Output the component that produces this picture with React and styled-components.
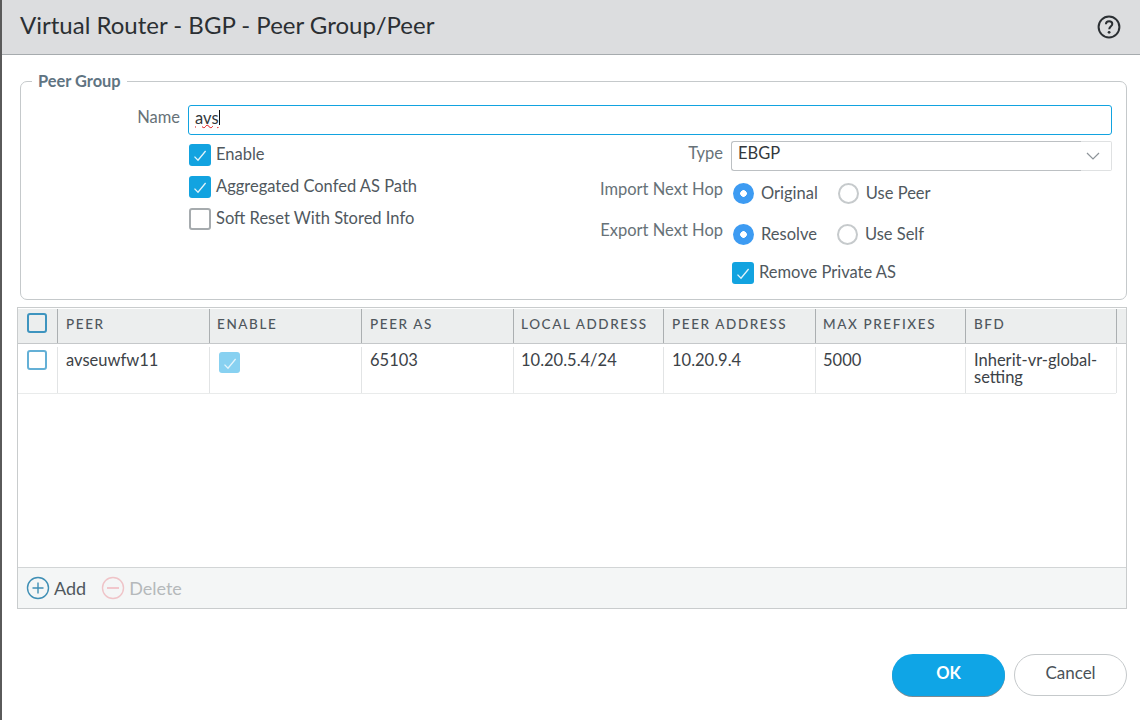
import React from "react";
import styled, { createGlobalStyle } from "styled-components";

const GlobalStyle = createGlobalStyle`
  html, body {
    margin: 0;
    padding: 0;
    background: #fff;
  }
  body {
    font-family: Lato, "Liberation Sans", sans-serif;
    color: #4a5258;
  }
`;

const columns = [
  { title: "PEER", width: 152, pad: 8, value: "avseuwfw11" },
  { title: "ENABLE", width: 152, pad: 7, check: true },
  { title: "PEER AS", width: 152, pad: 8, value: "65103" },
  { title: "LOCAL ADDRESS", width: 150, pad: 7, value: "10.20.5.4/24" },
  { title: "PEER ADDRESS", width: 152, pad: 8, value: "10.20.9.4" },
  { title: "MAX PREFIXES", width: 150, pad: 7, value: "5000" },
  { title: "BFD", width: 151, pad: 8, value: "Inherit-vr-global-setting" },
];

function Tick() {
  return (
    <svg width="14" height="14" viewBox="0 0 14 14" fill="none">
      <path d="M1.5 8.6 L5 12.2 L12.6 3" stroke="#e3f4fb" strokeWidth="1.3" />
    </svg>
  );
}

function CheckRow({ label, checked }) {
  return (
    <CheckLine>
      <CheckBox $checked={checked}>{checked && <Tick />}</CheckBox>
      <CheckText>{label}</CheckText>
    </CheckLine>
  );
}

function Radio({ label, on, gap }) {
  return (
    <RadioItem $gap={gap}>
      <RadioDot $on={on} />
      {label}
    </RadioItem>
  );
}

export default function App() {
  return (
    <Dialog>
      <GlobalStyle />
      <Header>
        <Title>Virtual Router - BGP - Peer Group/Peer</Title>
        <svg width="24" height="24" viewBox="0 0 24 24" fill="none">
          <circle cx="12" cy="12" r="10.4" stroke="#2b2f33" strokeWidth="2" />
          <path
            d="M8.9 9.2 C9 7.2 10.4 6.3 12.1 6.3 C14 6.3 15.3 7.4 15.3 9 C15.3 11.2 12.4 11.3 12.2 14.2"
            stroke="#2b2f33"
            strokeWidth="2"
          />
          <circle cx="12.1" cy="17.3" r="1.4" fill="#2b2f33" />
        </svg>
      </Header>
      <Body>
        <Group>
          <Legend>Peer Group</Legend>
          <NameRow>
            <NameLabel>Name</NameLabel>
            <NameField>
              <Misspelt>avs</Misspelt>
              <Caret />
            </NameField>
          </NameRow>
          <OptionsGrid>
            <LeftOptions>
              <CheckRow label="Enable" checked />
              <CheckRow label="Aggregated Confed AS Path" checked />
              <CheckRow label="Soft Reset With Stored Info" />
            </LeftOptions>
            <RightOptions>
              <TypeRow>
                <SideLabel>Type</SideLabel>
                <Select>
                  <SelectValue>EBGP</SelectValue>
                  <SelectArrow>
                    <svg width="16" height="10" viewBox="0 0 16 10" fill="none">
                      <path d="M2 2 L8 8 L14 2" stroke="#8d9499" strokeWidth="1.2" />
                    </svg>
                  </SelectArrow>
                </Select>
              </TypeRow>
              <HopRow>
                <SideLabel>Import Next Hop</SideLabel>
                <Radios>
                  <Radio label="Original" on gap={20} />
                  <Radio label="Use Peer" />
                </Radios>
              </HopRow>
              <HopRow>
                <SideLabel>Export Next Hop</SideLabel>
                <Radios>
                  <Radio label="Resolve" on gap={20} />
                  <Radio label="Use Self" />
                </Radios>
              </HopRow>
              <RemoveRow>
                <CheckRow label="Remove Private AS" checked />
              </RemoveRow>
            </RightOptions>
          </OptionsGrid>
        </Group>

        <TablePanel>
          <HeadRow>
            <SelectCell $head>
              <TableBox $head />
            </SelectCell>
            {columns.map((c) => (
              <HeadCell key={c.title} $width={c.width} $pad={c.pad}>
                {c.title}
              </HeadCell>
            ))}
          </HeadRow>
          <DataRow>
            <SelectCell>
              <TableBox />
            </SelectCell>
            {columns.map((c) => (
              <DataCell key={c.title} $width={c.width} $pad={c.pad}>
                {c.check ? (
                  <FadedCheck>
                    <Tick />
                  </FadedCheck>
                ) : (
                  c.value
                )}
              </DataCell>
            ))}
          </DataRow>
          <TableSpace />
          <TableFooter>
            <FooterAction>
              <svg width="24" height="24" viewBox="0 0 24 24" fill="none">
                <circle cx="12" cy="12" r="10.5" stroke="#3f8fb5" strokeWidth="1.4" />
                <path d="M12 6.5 V17.5 M6.5 12 H17.5" stroke="#3f8fb5" strokeWidth="1.4" />
              </svg>
              Add
            </FooterAction>
            <FooterAction $disabled>
              <svg width="24" height="24" viewBox="0 0 24 24" fill="none">
                <circle cx="12" cy="12" r="10.5" stroke="#efc4c8" strokeWidth="1.4" />
                <path d="M6 12 H18" stroke="#efb4ba" strokeWidth="1.4" />
              </svg>
              Delete
            </FooterAction>
          </TableFooter>
        </TablePanel>

        <Buttons>
          <OkButton>OK</OkButton>
          <CancelButton>Cancel</CancelButton>
        </Buttons>
      </Body>
    </Dialog>
  );
}

const Dialog = styled.div`
  width: 1140px;
  height: 720px;
  box-sizing: border-box;
  border-left: 2px solid #5a5a5a;
  background: #fff;
  overflow: hidden;
`;

const Header = styled.header`
  height: 54px;
  box-sizing: content-box;
  border-bottom: 1px solid #a6abae;
  background: #dcdddf;
  display: flex;
  align-items: center;
  justify-content: space-between;
  padding: 0 19px 0 18px;
`;

const Title = styled.h1`
  margin: -6px 0 0;
  font-size: 24px;
  font-weight: 400;
  color: #2b2f33;
`;

const Body = styled.div`
  padding: 0 13px 0 15px;
`;

const Group = styled.fieldset`
  margin: 17px 0 0 3px;
  padding: 0;
  height: 228px;
  box-sizing: border-box;
  border: 1px solid #c5c9cb;
  border-radius: 7px;
  min-width: 0;
`;

const Legend = styled.legend`
  margin-left: 11px;
  padding: 0 6px;
  font-size: 16.4px;
  font-weight: 700;
  line-height: 18px;
  color: #5f7482;
`;

const NameRow = styled.div`
  display: flex;
  align-items: center;
  gap: 8px;
  margin: 15px 14px 0 0;
`;

const NameLabel = styled.label`
  width: 159px;
  text-align: right;
  font-size: 16.5px;
  color: #677278;
  position: relative;
  top: -3px;
`;

const NameField = styled.div`
  flex: 1;
  height: 30px;
  box-sizing: border-box;
  border: 1px solid #12a3e0;
  border-radius: 3px;
  padding: 0 6px 5px;
  display: flex;
  align-items: center;
  font-size: 16.5px;
  color: #33383c;
`;

const Misspelt = styled.span`
  text-decoration: underline wavy #e01414 1px;
  text-underline-offset: 0px;
`;

const Caret = styled.span`
  width: 1px;
  height: 15px;
  background: #111;
`;

const OptionsGrid = styled.div`
  display: flex;
  margin: 6px 14px 0 168px;
`;

const LeftOptions = styled.div`
  width: 399px;
  padding-top: 3px;
  display: flex;
  flex-direction: column;
  gap: 10px;
`;

const CheckLine = styled.div`
  height: 22px;
  display: flex;
  align-items: center;
  gap: 5px;
  font-size: 16.5px;
  line-height: 18px;
  color: #50585e;
`;

const CheckText = styled.span`
  margin-top: -3px;
`;

const CheckBox = styled.span`
  width: 22px;
  height: 22px;
  box-sizing: border-box;
  border-radius: 3px;
  display: flex;
  align-items: center;
  justify-content: center;
  background: ${({ $checked }) => ($checked ? "#12a3e0" : "#fff")};
  border: ${({ $checked }) => ($checked ? "none" : "2px solid #a6abae")};
`;

const RightOptions = styled.div`
  flex: 1;
  display: flex;
  flex-direction: column;
`;

const TypeRow = styled.div`
  display: flex;
  align-items: center;
  gap: 8px;
  & > span:first-child {
    position: relative;
    top: -3px;
  }
`;

const SideLabel = styled.span`
  width: 135px;
  flex-shrink: 0;
  text-align: right;
  font-size: 16.5px;
  color: #677278;
  white-space: nowrap;
`;

const Select = styled.div`
  flex: 1;
  height: 30px;
  display: flex;
`;

const SelectValue = styled.div`
  flex: 1;
  box-sizing: border-box;
  padding: 0 6px;
  border: 1px solid #bcc0c3;
  border-right: none;
  border-radius: 3px 0 0 3px;
  font-size: 16.5px;
  line-height: 22px;
  color: #33383c;
`;

const SelectArrow = styled.div`
  width: 31px;
  box-sizing: border-box;
  padding-right: 6px;
  border: 1px solid #dfe1e2;
  border-left: none;
  border-radius: 0 2px 2px 0;
  display: flex;
  align-items: center;
  justify-content: center;
`;

const HopRow = styled.div`
  display: flex;
  gap: 8px;
  height: 22px;
  margin-top: 11px;
  & + & {
    margin-top: 19px;
  }
  & > span:first-child {
    position: relative;
    top: -3px;
  }
`;

const Radios = styled.div`
  display: flex;
  margin-left: 2px;
`;

const RadioItem = styled.div`
  display: flex;
  align-items: center;
  gap: 7px;
  font-size: 16.5px;
  color: #50585e;
  margin-right: ${({ $gap }) => $gap || 0}px;
`;

const RadioDot = styled.span`
  width: 21px;
  height: 21px;
  box-sizing: border-box;
  border-radius: 50%;
  ${({ $on }) =>
    $on
      ? "background: radial-gradient(circle, #fff 0 3px, #3d9bf2 3.6px);"
      : "border: 2px solid #c6cacc;"}
`;

const RemoveRow = styled.div`
  margin: 17px 0 0 144px;
`;

const TablePanel = styled.section`
  margin-top: 7px;
  height: 302px;
  box-sizing: border-box;
  border: 1px solid #c9cccd;
  display: flex;
  flex-direction: column;
`;

const HeadRow = styled.div`
  display: flex;
  height: 34px;
  margin-top: 1px;
  flex-shrink: 0;
  background: #eceeee;
  border-bottom: 1px solid #c5c8ca;
`;

const DataRow = styled.div`
  display: flex;
  height: 50px;
  box-sizing: border-box;
  flex-shrink: 0;
  border-bottom: 1px solid #e9ebeb;
  margin-right: 10px;
`;

const SelectCell = styled.div`
  width: 40px;
  flex-shrink: 0;
  display: flex;
  justify-content: center;
  align-items: flex-start;
  padding-top: ${({ $head }) => ($head ? "4px" : "3px")};
  padding-right: 1px;
  box-sizing: border-box;
  border-right: 1px solid ${({ $head }) => ($head ? "#abafb1" : "#e2e4e5")};
  margin-top: ${({ $head }) => ($head ? "0" : "3px")};
`;

const TableBox = styled.span`
  width: 20px;
  height: 20px;
  box-sizing: border-box;
  border-radius: 3px;
  border: 2px solid ${({ $head }) => ($head ? "#3d94bf" : "#64b0d6")};
  background: ${({ $head }) => ($head ? "#eceeee" : "#fff")};
`;

const HeadCell = styled.div`
  width: ${({ $width }) => $width}px;
  flex-shrink: 0;
  box-sizing: border-box;
  padding: 0 ${({ $pad }) => $pad}px;
  border-right: 1px solid #abafb1;
  font-size: 13.5px;
  font-weight: 500;
  line-height: 30px;
  letter-spacing: 1.6px;
  color: #4f575d;
  white-space: nowrap;
`;

const DataCell = styled.div`
  width: ${({ $width }) => $width}px;
  flex-shrink: 0;
  box-sizing: border-box;
  margin-top: 3px;
  padding: 5px ${({ $pad }) => $pad}px 0;
  border-right: 1px solid #e2e4e5;
  font-size: 16.5px;
  line-height: 17px;
  color: #3c4247;
`;

const FadedCheck = styled.span`
  display: flex;
  width: 21px;
  height: 21px;
  margin: 0 0 0 2px;
  border-radius: 3px;
  align-items: center;
  justify-content: center;
  background: #88d1f1;
`;

const TableSpace = styled.div`
  flex: 1;
`;

const TableFooter = styled.div`
  height: 41px;
  box-sizing: border-box;
  flex-shrink: 0;
  border-top: 1px solid #d2d5d6;
  background: #f4f6f6;
  display: flex;
  align-items: center;
  gap: 15px;
  padding-left: 8px;
`;

const FooterAction = styled.div`
  display: flex;
  align-items: center;
  gap: 4px;
  font-size: 18px;
  color: ${({ $disabled }) => ($disabled ? "#b5b9bb" : "#50585e")};
`;

const Buttons = styled.div`
  display: flex;
  justify-content: flex-end;
  gap: 9px;
  margin-top: 45px;
`;

const OkButton = styled.button`
  width: 113px;
  height: 42px;
  border: none;
  border-radius: 21px;
  padding-bottom: 6px;
  background: #0fa5e6;
  box-shadow: 0 1px 0 #7d8a92;
  color: #fff;
  font: 700 16.5px Lato, "Liberation Sans", sans-serif;
`;

const CancelButton = styled.button`
  width: 113px;
  height: 42px;
  border: 1px solid #c5c9cb;
  border-radius: 21px;
  padding-bottom: 6px;
  background: #fff;
  color: #4a5258;
  font: 400 17px Lato, "Liberation Sans", sans-serif;
`;
